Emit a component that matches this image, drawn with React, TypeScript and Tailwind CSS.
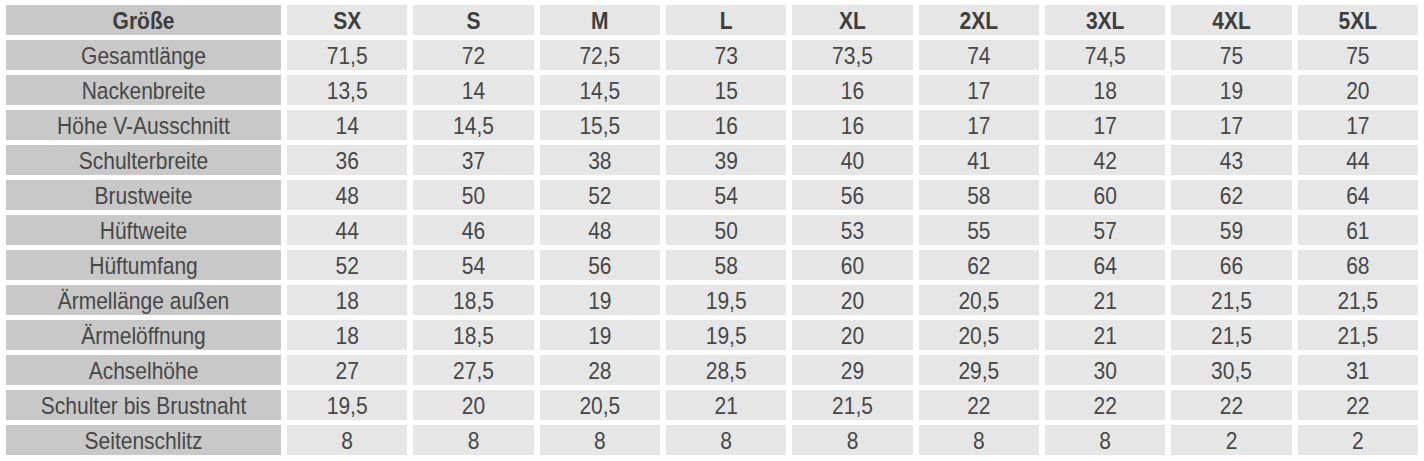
import React from "react";

const sizes = ["SX", "S", "M", "L", "XL", "2XL", "3XL", "4XL", "5XL"];

const rows: [string, string[]][] = [
  ["Gesamtlänge", ["71,5", "72", "72,5", "73", "73,5", "74", "74,5", "75", "75"]],
  ["Nackenbreite", ["13,5", "14", "14,5", "15", "16", "17", "18", "19", "20"]],
  ["Höhe V-Ausschnitt", ["14", "14,5", "15,5", "16", "16", "17", "17", "17", "17"]],
  ["Schulterbreite", ["36", "37", "38", "39", "40", "41", "42", "43", "44"]],
  ["Brustweite", ["48", "50", "52", "54", "56", "58", "60", "62", "64"]],
  ["Hüftweite", ["44", "46", "48", "50", "53", "55", "57", "59", "61"]],
  ["Hüftumfang", ["52", "54", "56", "58", "60", "62", "64", "66", "68"]],
  ["Ärmellänge außen", ["18", "18,5", "19", "19,5", "20", "20,5", "21", "21,5", "21,5"]],
  ["Ärmelöffnung", ["18", "18,5", "19", "19,5", "20", "20,5", "21", "21,5", "21,5"]],
  ["Achselhöhe", ["27", "27,5", "28", "28,5", "29", "29,5", "30", "30,5", "31"]],
  ["Schulter bis Brustnaht", ["19,5", "20", "20,5", "21", "21,5", "22", "22", "22", "22"]],
  ["Seitenschlitz", ["8", "8", "8", "8", "8", "8", "8", "2", "2"]],
];

function Cell({ children, dark, bold }: { children: React.ReactNode; dark?: boolean; bold?: boolean }) {
  return (
    <div
      className={
        (dark ? "bg-[#c8c8c8] " : "bg-[#e6e6e7] ") +
        (bold ? "font-bold text-[#3e3e3e] " : "text-[#474747] ") +
        "flex items-center justify-center text-[21px] leading-none"
      }
    >
      <span className="inline-block scale-y-[1.12]">{children}</span>
    </div>
  );
}

export default function App() {
  return (
    <div
      className="w-[1424px] h-[461px] bg-white pt-[5px] pl-[6px] pr-[6px]"
      style={{ fontFamily: '"Liberation Sans", Arial, sans-serif' }}
    >
      <div className="grid grid-cols-[275px_repeat(9,minmax(0,1fr))] gap-x-[6px] gap-y-[5px] auto-rows-[30px]">
        <Cell dark bold>
          Größe
        </Cell>
        {sizes.map((s) => (
          <Cell key={s} bold>
            {s}
          </Cell>
        ))}
        {rows.map(([label, vals]) => (
          <React.Fragment key={label}>
            <Cell dark>{label}</Cell>
            {vals.map((v, i) => (
              <Cell key={i}>{v}</Cell>
            ))}
          </React.Fragment>
        ))}
      </div>
    </div>
  );
}
